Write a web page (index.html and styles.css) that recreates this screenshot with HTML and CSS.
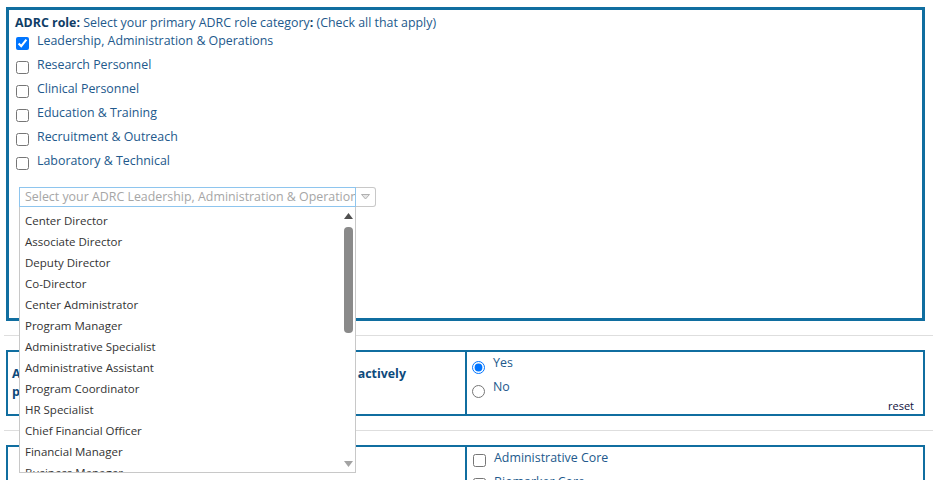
FILE: index.html
```html
<!DOCTYPE html>
<html lang="en">
<head>
<meta charset="utf-8">
<title>ADRC role</title>
<link rel="stylesheet" href="styles.css">
</head>
<body>
<div class="page">
  <div class="box box-main">
    <div class="q-head"><b>ADRC role:</b> Select your primary ADRC role category<b>:</b> (Check all that apply)</div>
    <div class="choices">
      <label class="choice"><input type="checkbox" checked><span>Leadership, Administration &amp; Operations</span></label>
      <label class="choice"><input type="checkbox"><span>Research Personnel</span></label>
      <label class="choice"><input type="checkbox"><span>Clinical Personnel</span></label>
      <label class="choice"><input type="checkbox"><span>Education &amp; Training</span></label>
      <label class="choice"><input type="checkbox"><span>Recruitment &amp; Outreach</span></label>
      <label class="choice"><input type="checkbox"><span>Laboratory &amp; Technical</span></label>
    </div>
    <div class="combo">
      <div class="combo-field">
        <div class="combo-input">Select your ADRC Leadership, Administration &amp; Operations role</div>
        <div class="combo-btn">
          <svg width="9" height="6" viewBox="0 0 9 6"><polygon points="0.5,0.5 8.5,0.5 4.5,5" fill="#e6e6e6" stroke="#b0b0b0" stroke-width="1"/></svg>
        </div>
      </div>
      <div class="combo-list">
        <ul class="combo-items">
          <li>Center Director</li>
          <li>Associate Director</li>
          <li>Deputy Director</li>
          <li>Co-Director</li>
          <li>Center Administrator</li>
          <li>Program Manager</li>
          <li>Administrative Specialist</li>
          <li>Administrative Assistant</li>
          <li>Program Coordinator</li>
          <li>HR Specialist</li>
          <li>Chief Financial Officer</li>
          <li>Financial Manager</li>
          <li>Business Manager</li>
          <li>Grants Manager</li>
          <li>Communications Specialist</li>
          <li>Other</li>
        </ul>
        <div class="scrollbar">
          <svg class="sb-up" width="9" height="6" viewBox="0 0 9 6"><polygon points="4.5,0 9,6 0,6" fill="#505050"/></svg>
          <div class="sb-thumb"></div>
          <svg class="sb-down" width="9" height="6" viewBox="0 0 9 6"><polygon points="0,0 9,0 4.5,6" fill="#a3a3a3"/></svg>
        </div>
      </div>
    </div>
  </div>

  <hr class="sep">

  <div class="box row row-two">
    <div class="cell-q">Are you currently an ADRC faculty/staff member who is actively participating in ADRC research activities?</div>
    <div class="cell-a">
      <label class="choice"><input type="radio" name="active" checked class="radio"><span>Yes</span></label>
      <label class="choice"><input type="radio" name="active" class="radio"><span>No</span></label>
      <div class="reset">reset</div>
    </div>
  </div>

  <hr class="sep">

  <div class="box row">
    <div class="cell-q">Which ADRC core(s) are you affiliated with? (Check all that apply)</div>
    <div class="cell-a">
      <label class="choice"><input type="checkbox"><span>Administrative Core</span></label>
      <label class="choice"><input type="checkbox"><span>Biomarker Core</span></label>
      <label class="choice"><input type="checkbox"><span>Clinical Core</span></label>
      <label class="choice"><input type="checkbox"><span>Data Management &amp; Statistics Core</span></label>
      <label class="choice"><input type="checkbox"><span>Neuropathology Core</span></label>
      <label class="choice"><input type="checkbox"><span>Neuroimaging Core</span></label>
      <label class="choice"><input type="checkbox"><span>Outreach, Recruitment &amp; Engagement Core</span></label>
      <label class="choice"><input type="checkbox"><span>Research Education Component</span></label>
    </div>
  </div>
</div>
</body>
</html>
```

FILE: styles.css
```css
* { box-sizing: border-box; }

html, body {
  margin: 0;
  background: #ffffff;
}

body {
  font-family: "Open Sans", "Liberation Sans", sans-serif;
  font-size: 12.4px;
  color: #22598c;
  height: 480px;
  overflow: hidden;
}

.page {
  padding: 7px 8px 0 6px;
}

.box {
  border: 2px solid #106ea0;
}

.box-main {
  border-width: 3px;
  height: 314px;
  padding: 4px 6px 0;
}

.q-head {
  line-height: 18px;
  white-space: nowrap;
}

.q-head b {
  color: #0f3d66;
}

.choice {
  display: flex;
  align-items: flex-start;
  height: 24px;
  line-height: 18px;
  white-space: nowrap;
}

.choice input {
  flex: none;
  width: 13px;
  height: 13px;
  margin: 5px 8px 0 1px;
}

.choice input.radio {
  margin: 7px 8px 0 0;
}

/* combobox */
.combo {
  position: relative;
  width: 357px;
  margin: 11px 0 0 4px;
}

.combo-field {
  display: flex;
  height: 20px;
}

.combo-input {
  width: 337px;
  border: 1px solid #8ec5ee;
  padding: 0 5px;
  line-height: 18px;
  color: #a6a6a6;
  white-space: nowrap;
  overflow: hidden;
}

.combo-btn {
  width: 20px;
  border: 1px solid #c8c8c8;
  border-left: none;
  border-radius: 0 3px 3px 0;
  display: flex;
  align-items: center;
  justify-content: center;
  background: #ffffff;
}

.combo-list {
  position: absolute;
  top: 20px;
  left: 0;
  z-index: 10;
  width: 337px;
  height: 266px;
  border: 1px solid #c8c8c8;
  border-top: none;
  background: #ffffff;
  display: flex;
}

.combo-items {
  flex: 1;
  list-style: none;
  margin: 0;
  padding: 3px 0 0 5px;
  overflow: hidden;
  font-size: 11.5px;
  color: #333333;
}

.combo-items li {
  height: 21px;
  line-height: 21px;
  white-space: nowrap;
}

.scrollbar {
  flex: none;
  width: 14px;
  display: flex;
  flex-direction: column;
  align-items: center;
  padding: 6px 0 5px;
}

.sb-thumb {
  width: 9px;
  height: 106px;
  margin-top: 8px;
  border-radius: 4px;
  background: #8a8a8a;
}

.sb-down {
  margin-top: auto;
}

/* separators */
.sep {
  border: 0;
  height: 1px;
  background: #dedede;
  margin: 14px -8px 14px -2px;
}

/* question rows */
.row {
  display: flex;
}

.row-two {
  height: 66px;
}

.cell-q {
  flex: none;
  width: 459px;
  border-right: 2px solid #106ea0;
  padding: 0 8px 0 4px;
  display: flex;
  align-items: center;
  font-weight: 700;
  color: #0d4a7c;
  line-height: 18px;
}

.cell-a {
  flex: 1;
  padding: 2px 9px 0 5px;
}

.reset {
  margin-top: -3px;
  text-align: right;
  font-size: 11px;
  line-height: 13px;
  color: #101040;
}
```
